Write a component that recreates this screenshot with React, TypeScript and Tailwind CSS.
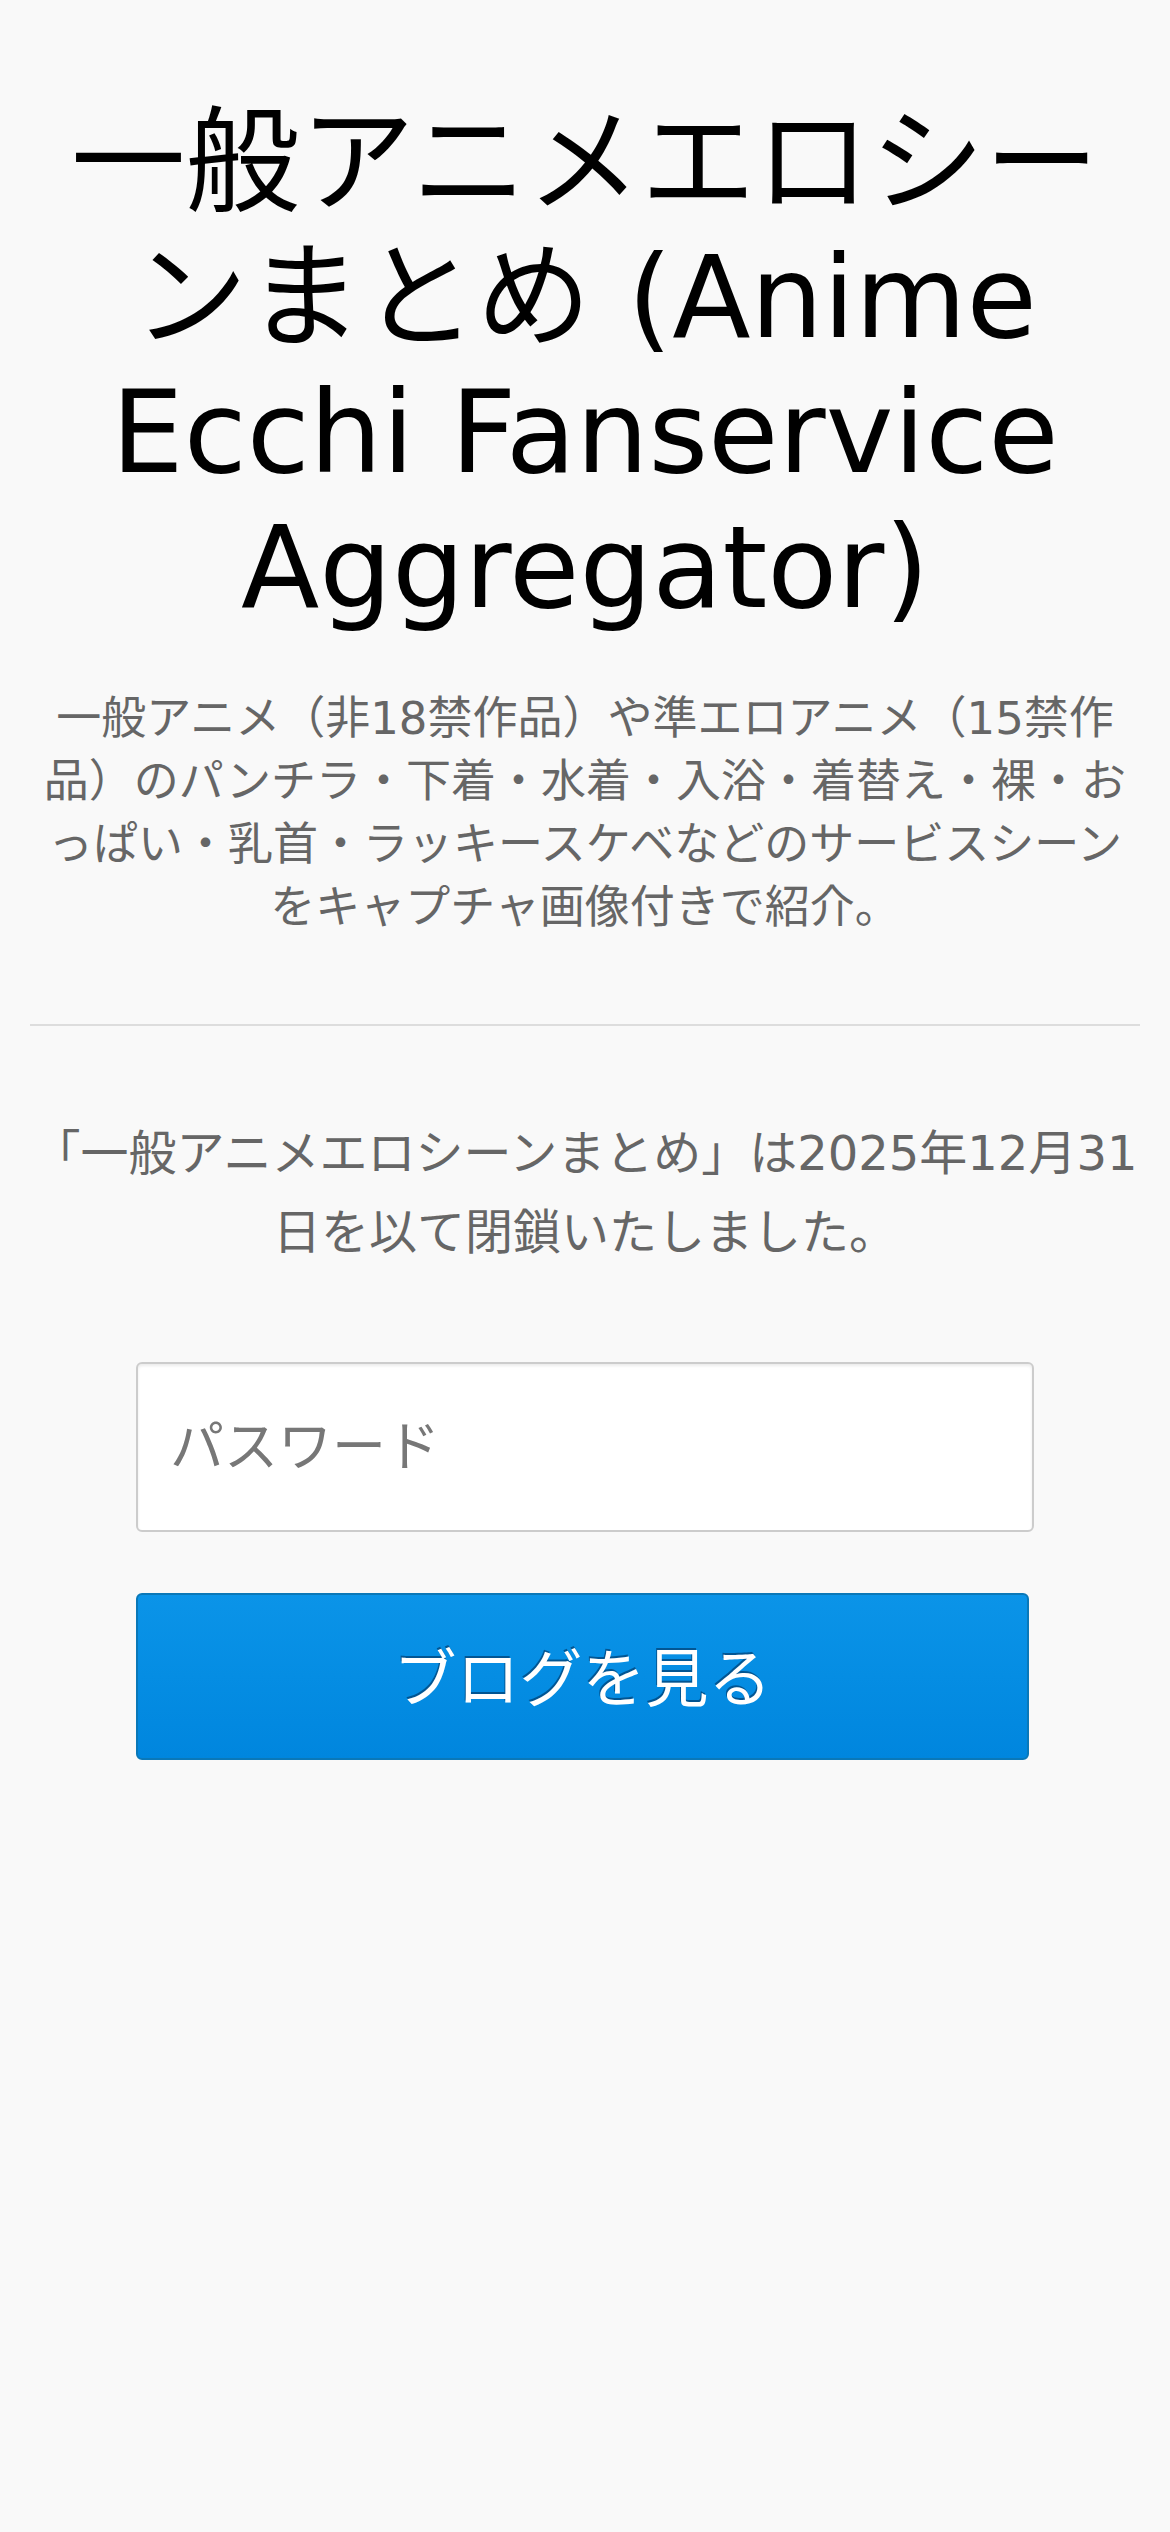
import React, { useState } from 'react';

const App: React.FC = () => {
  const [password, setPassword] = useState('');

  return (
    <div className="min-h-[2532px] bg-[#f9f9f9] px-[30px] pt-[95px] text-center font-['DejaVu_Sans','Noto_Sans_CJK_JP',sans-serif]">
      <h1 className="text-[114.5px] leading-[135px] font-normal text-black">
        一般アニメエロシーンまとめ (Anime Ecchi Fanservice Aggregator)
      </h1>
      <p className="mt-[52px] text-[45px] leading-[63px] text-[#666]">
        一般アニメ（非18禁作品）や準エロアニメ（15禁作品）のパンチラ・下着・水着・入浴・着替え・裸・おっぱい・乳首・ラッキースケベなどのサービスシーンをキャプチャ画像付きで紹介。
      </p>

      <hr className="mt-[85px] border-t-2 border-[#dddddd]" />

      <p className="mt-[88px] text-[48px] leading-[79px] text-[#666]">
        「一般アニメエロシーンまとめ」は2025年12月31日を以て閉鎖いたしました。
      </p>

      <form className="mx-auto mt-[90px] w-[898px]" onSubmit={(e) => e.preventDefault()}>
        <input
          type="password"
          value={password}
          onChange={(e) => setPassword(e.target.value)}
          placeholder="パスワード"
          className="block h-[170px] w-full rounded-[6px] border-2 border-[#cccccc] bg-white px-[32px] text-left text-[54px] text-[#333] shadow-[inset_0_2px_3px_rgba(0,0,0,0.08)] outline-none placeholder:text-[#777]"
        />
        <button
          type="submit"
          className="mt-[61px] block h-[167px] w-[893px] rounded-[6px] border-2 border-[#0a78b8] bg-linear-to-b from-[#0b94e8] to-[#0086de] pt-[8px] text-[63px] text-white [text-shadow:-1px_-2px_0_rgba(0,40,80,0.55)]"
        >
          ブログを見る
        </button>
      </form>
    </div>
  );
};

export default App;
